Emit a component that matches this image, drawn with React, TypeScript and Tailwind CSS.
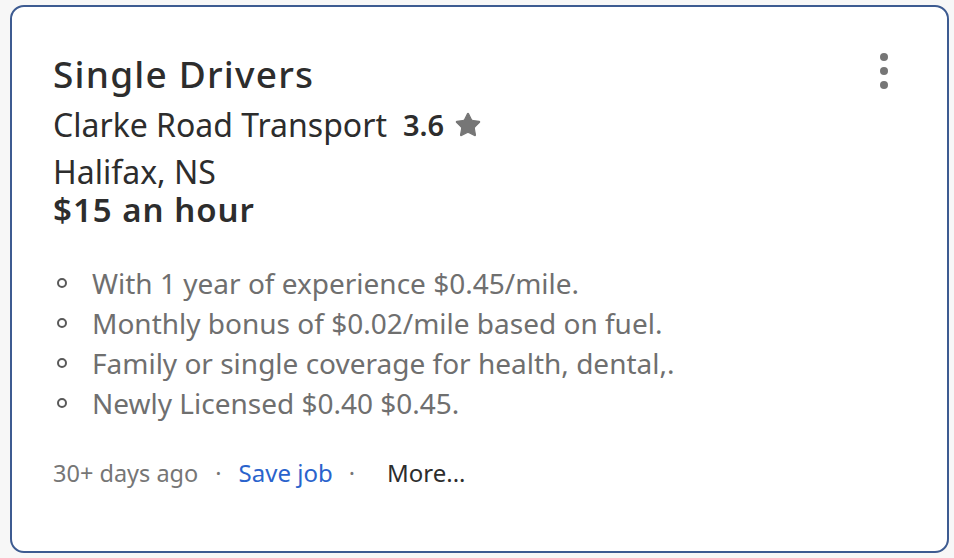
import { Star } from "lucide-react";

const bullets = [
  "With 1 year of experience $0.45/mile.",
  "Monthly bonus of $0.02/mile based on fuel.",
  "Family or single coverage for health, dental,.",
  "Newly Licensed $0.40 $0.45.",
];

export default function App() {
  return (
    <div className="h-[558px] w-[954px] bg-[#f7f7f7] pl-[10px] pr-[5px] pt-[5px] pb-[5px] font-['Noto_Sans',sans-serif]">
      <div className="relative flex h-[548px] flex-col rounded-[14px] border-2 border-[#3d5b91] bg-white pl-[41px] pt-[45px]">
        <button className="absolute right-[55px] top-[42px] flex flex-col items-center gap-[6px] p-1" type="button" aria-label="More actions">
          <span className="h-[8px] w-[8px] rounded-full bg-[#767676]" />
          <span className="h-[8px] w-[8px] rounded-full bg-[#767676]" />
          <span className="h-[8px] w-[8px] rounded-full bg-[#767676]" />
        </button>
        <h2 className="text-[37px] font-medium leading-[44px] tracking-[1.2px] text-[#2d2d2d]">Single Drivers</h2>
        <div className="mt-[9px] flex items-center text-[32px] leading-[40px] text-[#2d2d2d]">
          <span>Clarke Road Transport</span>
          <span className="ml-[16px] text-[29px] font-semibold">3.6</span>
          <Star className="ml-[10px]" size={28} fill="#767676" stroke="#767676" strokeWidth={1} />
        </div>
        <div className="mt-[8px] text-[32px] leading-[38px] text-[#2d2d2d]">Halifax, NS</div>
        <div className="text-[33px] font-semibold leading-[38px] tracking-[1px] text-[#2d2d2d]">$15 an hour</div>
        <ul className="mt-[34px] flex flex-col pl-[4px]">
          {bullets.map((item) => (
            <li className="flex items-center text-[28px] leading-[40px] text-[#6f6f6f]" key={item}>
              <span className="mr-[25px] h-[10px] w-[10px] rounded-full border-2 border-[#595959]" />
              {item}
            </li>
          ))}
        </ul>
        <div className="mt-[35px] flex items-center text-[23.5px] leading-[30px]">
          <span className="text-[#767676]">30+ days ago</span>
          <span className="mx-[17px] text-[#767676]">·</span>
          <span className="text-[24px] text-[#2a63cc]">Save job</span>
          <span className="ml-[16px] mr-[32px] text-[#767676]">·</span>
          <span className="text-[24px] text-[#2d2d2d]">More...</span>
        </div>
      </div>
    </div>
  );
}
